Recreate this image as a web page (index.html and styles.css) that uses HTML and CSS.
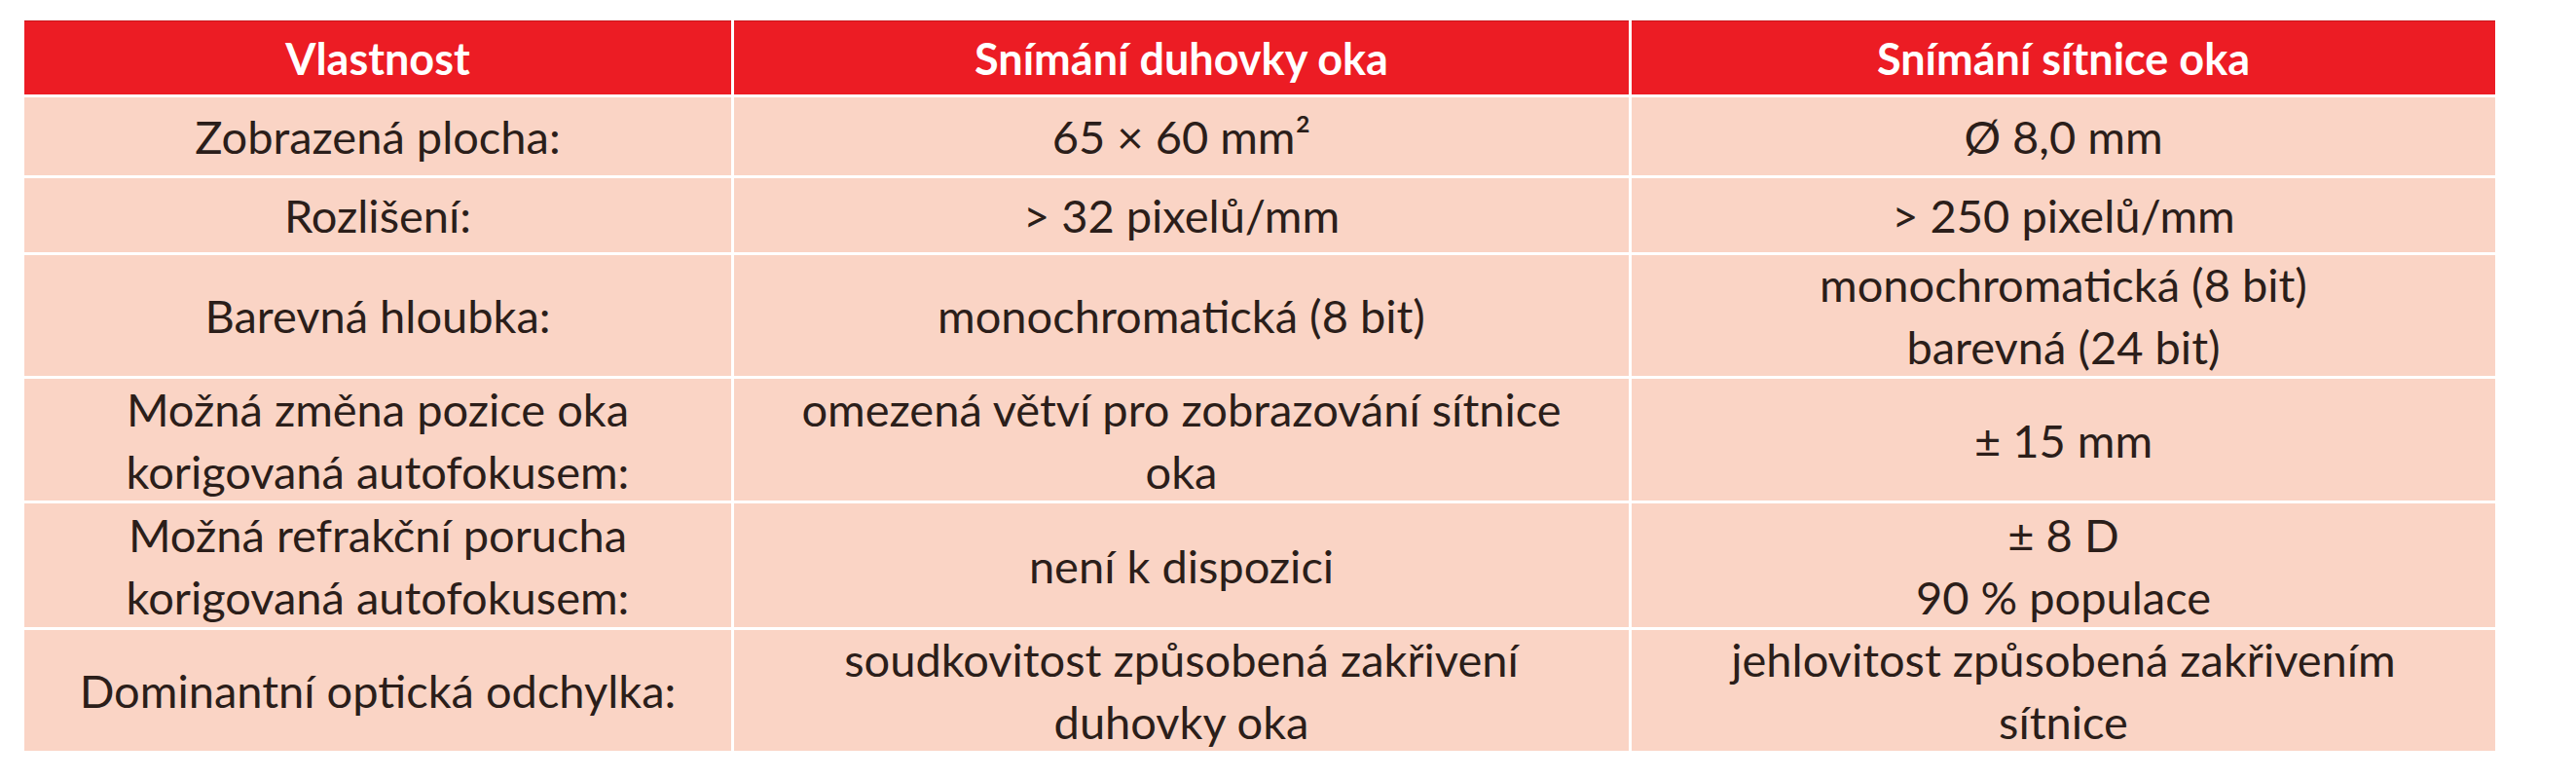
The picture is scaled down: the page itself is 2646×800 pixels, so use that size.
FILE: index.html
```html
<!DOCTYPE html>
<html lang="cs">
<head>
<meta charset="utf-8">
<title>Porovnání snímání duhovky a sítnice oka</title>
<link rel="stylesheet" href="styles.css">
</head>
<body>
<div class="page">
  <div class="tbl">
    <div class="cell head">Vlastnost</div>
    <div class="cell head">Snímání duhovky oka</div>
    <div class="cell head">Snímání sítnice oka</div>

    <div class="cell">Zobrazená plocha:</div>
    <div class="cell">65 × 60 mm²</div>
    <div class="cell">Ø 8,0 mm</div>

    <div class="cell">Rozlišení:</div>
    <div class="cell">&gt; 32 pixelů/mm</div>
    <div class="cell">&gt; 250 pixelů/mm</div>

    <div class="cell">Barevná hloubka:</div>
    <div class="cell">monochromatická (8 bit)</div>
    <div class="cell">monochromatická (8 bit)<br>barevná (24 bit)</div>

    <div class="cell">Možná změna pozice oka<br>korigovaná autofokusem:</div>
    <div class="cell">omezená větví pro zobrazování sítnice<br>oka</div>
    <div class="cell">± 15 mm</div>

    <div class="cell">Možná refrakční porucha<br>korigovaná autofokusem:</div>
    <div class="cell">není k dispozici</div>
    <div class="cell">± 8 D<br>90 % populace</div>

    <div class="cell">Dominantní optická odchylka:</div>
    <div class="cell">soudkovitost způsobená zakřivení<br>duhovky oka</div>
    <div class="cell">jehlovitost způsobená zakřivením<br>sítnice</div>
  </div>
</div>
</body>
</html>
```

FILE: styles.css
```css
html, body {
  margin: 0;
  padding: 0;
  background: #ffffff;
}

.page {
  padding: 21px 0 0 25px;
}

.tbl {
  display: grid;
  grid-template-columns: 726px 919px 887px;
  grid-template-rows: 76px 80px 76px 124px 125px 127px 124px;
  gap: 3px;
  width: 2538px;
  font-family: "Lato", "Open Sans", "Liberation Sans", sans-serif;
  font-size: 47px;
  line-height: 64px;
  color: #2b1e1a;
}

.cell {
  background: #fad4c5;
  display: flex;
  align-items: center;
  justify-content: center;
  text-align: center;
}

.head {
  background: #ec1c24;
  color: #ffffff;
  font-size: 45px;
  font-weight: 700;
  border-top: 1px solid #c8161c;
}
```
